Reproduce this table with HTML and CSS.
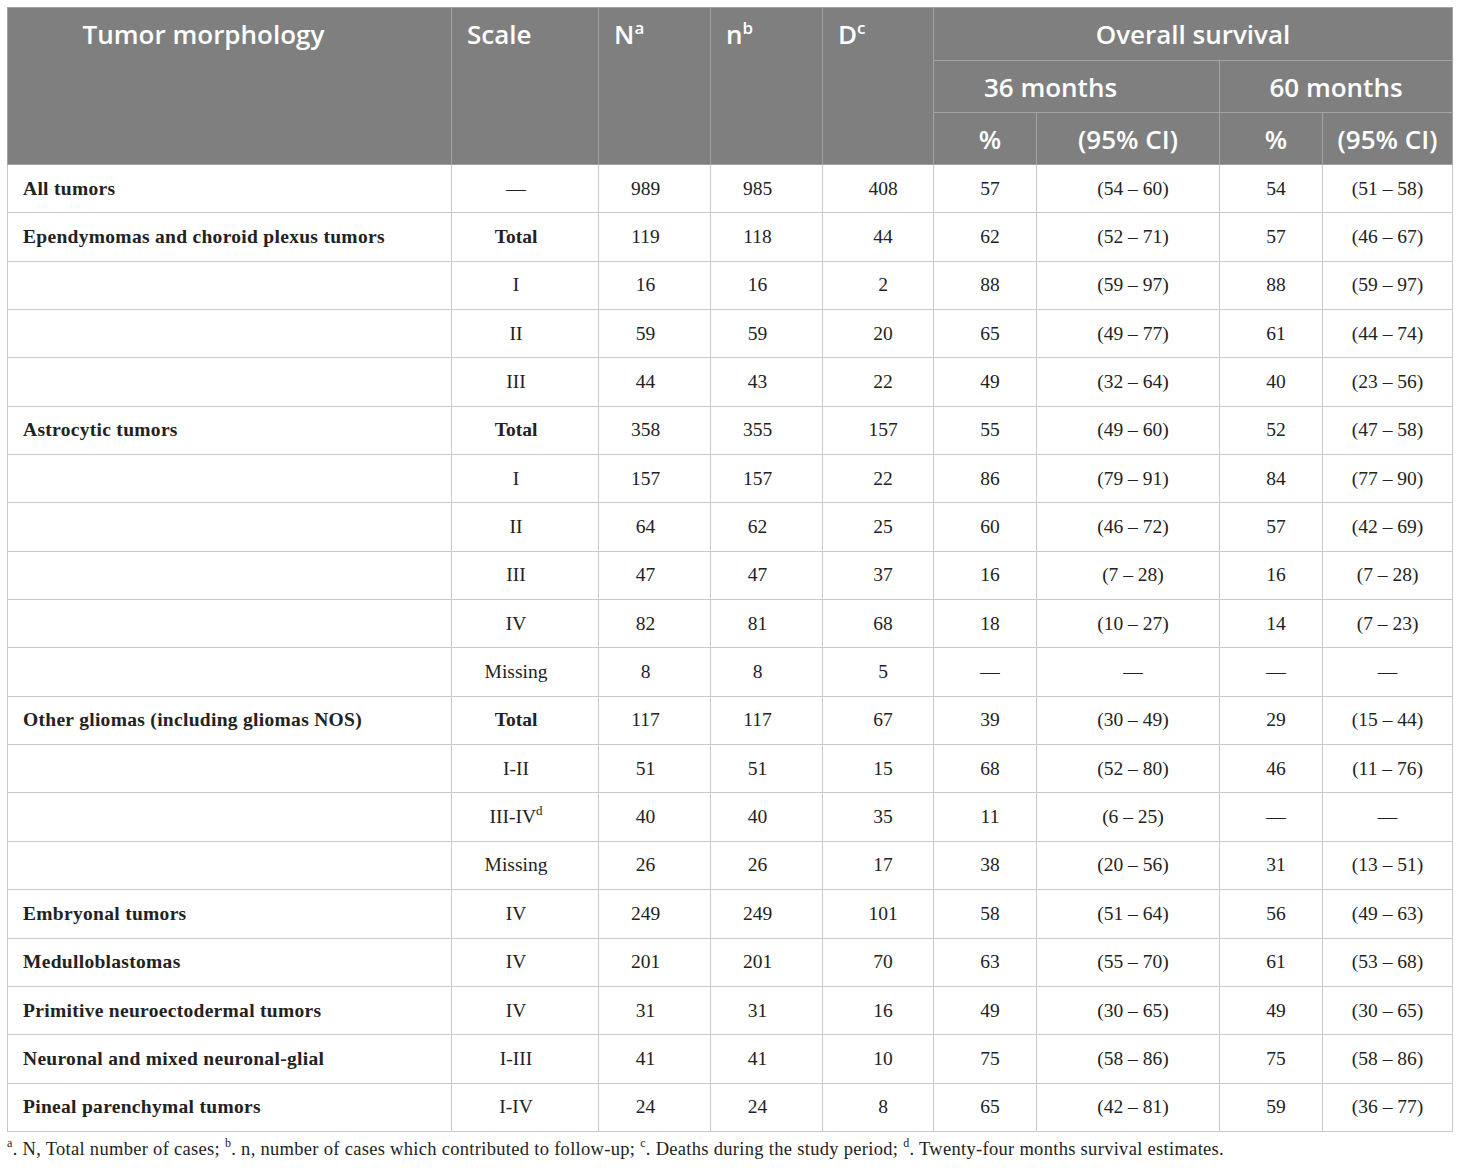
FILE: index.html
```html
<!DOCTYPE html>
<html>
<head>
<meta charset="utf-8">
<link rel="stylesheet" href="styles.css">
</head>
<body>
<div class="wrap">
<table class="tbl">
  <colgroup>
    <col class="c1"><col class="c2"><col class="c3"><col class="c4"><col class="c5"><col class="c6"><col class="c7"><col class="c8"><col class="c9">
  </colgroup>
  <thead>
    <tr class="h1">
      <th rowspan="3" class="center first">Tumor morphology</th>
      <th rowspan="3">Scale</th>
      <th rowspan="3">N<sup>a</sup></th>
      <th rowspan="3">n<sup>b</sup></th>
      <th rowspan="3">D<sup>c</sup></th>
      <th colspan="4" class="center">Overall survival</th>
    </tr>
    <tr class="h2">
      <th colspan="2" class="center m36">36 months</th>
      <th colspan="2" class="center">60 months</th>
    </tr>
    <tr class="h3">
      <th class="center sh">%</th>
      <th class="center">(95% CI)</th>
      <th class="center sh">%</th>
      <th class="center">(95% CI)</th>
    </tr>
  </thead>
  <tbody>
    <tr><td class="name">All tumors</td><td>—</td><td>989</td><td>985</td><td>408</td><td>57</td><td>(54 – 60)</td><td>54</td><td>(51 – 58)</td></tr>
    <tr><td class="name">Ependymomas and choroid plexus tumors</td><td class="b">Total</td><td>119</td><td>118</td><td>44</td><td>62</td><td>(52 – 71)</td><td>57</td><td>(46 – 67)</td></tr>
    <tr><td class="name"></td><td>I</td><td>16</td><td>16</td><td>2</td><td>88</td><td>(59 – 97)</td><td>88</td><td>(59 – 97)</td></tr>
    <tr><td class="name"></td><td>II</td><td>59</td><td>59</td><td>20</td><td>65</td><td>(49 – 77)</td><td>61</td><td>(44 – 74)</td></tr>
    <tr><td class="name"></td><td>III</td><td>44</td><td>43</td><td>22</td><td>49</td><td>(32 – 64)</td><td>40</td><td>(23 – 56)</td></tr>
    <tr><td class="name">Astrocytic tumors</td><td class="b">Total</td><td>358</td><td>355</td><td>157</td><td>55</td><td>(49 – 60)</td><td>52</td><td>(47 – 58)</td></tr>
    <tr><td class="name"></td><td>I</td><td>157</td><td>157</td><td>22</td><td>86</td><td>(79 – 91)</td><td>84</td><td>(77 – 90)</td></tr>
    <tr><td class="name"></td><td>II</td><td>64</td><td>62</td><td>25</td><td>60</td><td>(46 – 72)</td><td>57</td><td>(42 – 69)</td></tr>
    <tr><td class="name"></td><td>III</td><td>47</td><td>47</td><td>37</td><td>16</td><td>(7 – 28)</td><td>16</td><td>(7 – 28)</td></tr>
    <tr><td class="name"></td><td>IV</td><td>82</td><td>81</td><td>68</td><td>18</td><td>(10 – 27)</td><td>14</td><td>(7 – 23)</td></tr>
    <tr><td class="name"></td><td>Missing</td><td>8</td><td>8</td><td>5</td><td>—</td><td>—</td><td>—</td><td>—</td></tr>
    <tr><td class="name">Other gliomas (including gliomas NOS)</td><td class="b">Total</td><td>117</td><td>117</td><td>67</td><td>39</td><td>(30 – 49)</td><td>29</td><td>(15 – 44)</td></tr>
    <tr><td class="name"></td><td>I-II</td><td>51</td><td>51</td><td>15</td><td>68</td><td>(52 – 80)</td><td>46</td><td>(11 – 76)</td></tr>
    <tr><td class="name"></td><td>III-IV<sup>d</sup></td><td>40</td><td>40</td><td>35</td><td>11</td><td>(6 – 25)</td><td>—</td><td>—</td></tr>
    <tr><td class="name"></td><td>Missing</td><td>26</td><td>26</td><td>17</td><td>38</td><td>(20 – 56)</td><td>31</td><td>(13 – 51)</td></tr>
    <tr><td class="name">Embryonal tumors</td><td>IV</td><td>249</td><td>249</td><td>101</td><td>58</td><td>(51 – 64)</td><td>56</td><td>(49 – 63)</td></tr>
    <tr><td class="name">Medulloblastomas</td><td>IV</td><td>201</td><td>201</td><td>70</td><td>63</td><td>(55 – 70)</td><td>61</td><td>(53 – 68)</td></tr>
    <tr><td class="name">Primitive neuroectodermal tumors</td><td>IV</td><td>31</td><td>31</td><td>16</td><td>49</td><td>(30 – 65)</td><td>49</td><td>(30 – 65)</td></tr>
    <tr><td class="name">Neuronal and mixed neuronal-glial</td><td>I-III</td><td>41</td><td>41</td><td>10</td><td>75</td><td>(58 – 86)</td><td>75</td><td>(58 – 86)</td></tr>
    <tr><td class="name">Pineal parenchymal tumors</td><td>I-IV</td><td>24</td><td>24</td><td>8</td><td>65</td><td>(42 – 81)</td><td>59</td><td>(36 – 77)</td></tr>
  </tbody>
</table>
<p class="note"><sup>a</sup>. N, Total number of cases; <sup>b</sup>. n, number of cases which contributed to follow-up; <sup>c</sup>. Deaths during the study period; <sup>d</sup>. Twenty-four months survival estimates.</p>
</div>
</body>
</html>
```

FILE: styles.css
```css
html, body {
  margin: 0;
  padding: 0;
  background: #ffffff;
}

.wrap {
  padding: 7px 8px 0 7px;
}

.tbl {
  border-collapse: collapse;
  table-layout: fixed;
  width: 1445px;
  font-family: "Liberation Serif", "Times New Roman", serif;
  color: #222222;
}

.c1 { width: 444px; }
.c2 { width: 147px; }
.c3 { width: 112px; }
.c4 { width: 112px; }
.c5 { width: 111px; }
.c6 { width: 103px; }
.c7 { width: 183px; }
.c8 { width: 103px; }
.c9 { width: 130px; }

.tbl th {
  background: #7f7f7f;
  color: #ffffff;
  font-family: "Open Sans", "Lato", sans-serif;
  font-weight: 600;
  font-size: 26px;
  text-align: left;
  vertical-align: top;
  padding: 9px 10px 0 15px;
  border: 1px solid #a3a3a3;
  line-height: 34px;
  white-space: nowrap;
}

.tbl th.center {
  text-align: center;
  padding-left: 10px;
}

.tbl th.first {
  padding-right: 62px;
}

.tbl th.m36 {
  padding-right: 62px;
}

.tbl th.sh {
  padding-left: 20px;
}

.tbl tr.h1 th { height: 43px; }
.tbl tr.h2 th { height: 42px; }
.tbl tr.h3 th { height: 42px; }

.tbl th sup {
  font-size: 17px;
  line-height: 0;
  vertical-align: 10px;
}

.tbl td {
  border: 1px solid #c9c9c9;
  height: 47.35px;
  padding: 0 8px;
  font-size: 19.5px;
  text-align: center;
  vertical-align: middle;
  white-space: nowrap;
}

.tbl td:nth-child(2),
.tbl td:nth-child(3),
.tbl td:nth-child(4) {
  padding: 0 26px 0 8px;
}

.tbl td:nth-child(5),
.tbl td:nth-child(6),
.tbl td:nth-child(7),
.tbl td:nth-child(8) {
  padding: 0 4px 0 14px;
}

.tbl td.name {
  text-align: left;
  font-weight: bold;
  padding: 0 8px 0 15px;
  letter-spacing: 0.3px;
}

.tbl td.b {
  font-weight: bold;
}

.tbl td sup {
  font-size: 13px;
  line-height: 0;
  vertical-align: 8px;
}

.note {
  margin: 7px 0 0 0;
  font-family: "Liberation Serif", "Times New Roman", serif;
  font-size: 18.5px;
  color: #222222;
  letter-spacing: 0.3px;
}

.note sup {
  font-size: 12px;
  line-height: 0;
  vertical-align: 8px;
}
```
